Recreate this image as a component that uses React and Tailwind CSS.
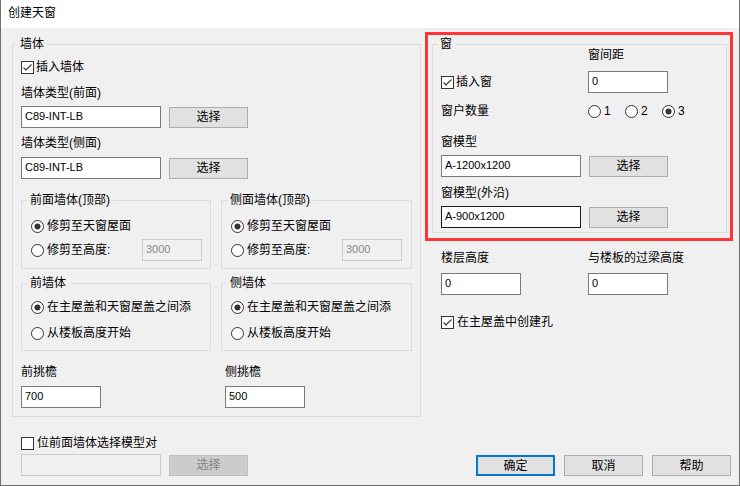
import React from "react";

function Check({ checked }) {
  return (
    <span className="w-[13px] h-[13px] shrink-0 bg-white border border-[#333333] flex items-center justify-center">
      {checked && (
        <svg width="11" height="11" viewBox="0 0 11 11">
          <path d="M1.5 5.5 L4 8 L9.5 2.5" stroke="#333333" strokeWidth="1.1" fill="none" />
        </svg>
      )}
    </span>
  );
}

function Radio({ on }) {
  return (
    <svg width="13" height="13" viewBox="0 0 13 13" className="shrink-0">
      <circle cx="6.5" cy="6.5" r="6" fill="white" stroke="#333333" strokeWidth="1" />
      {on && <circle cx="6.5" cy="6.5" r="3" fill="#333333" />}
    </svg>
  );
}

function Field({ w = "w-[140px]", children, focused, disabled }) {
  const cls = disabled
    ? "bg-[#f0f0f0] border-[#cccccc] text-[#8a8a8a]"
    : focused
    ? "bg-white border-[#1a1a1a] text-black"
    : "bg-white border-[#7a7a7a] text-black";
  return (
    <div className={`${w} h-[22px] shrink-0 border ${cls} flex items-center pl-[3px] pb-[2px] text-[11px] leading-[16px]`}>
      {children}
    </div>
  );
}

function Btn({ children, primary, disabled }) {
  const cls = primary
    ? "border-2 border-[#0078d7] bg-[#e1e1e1] text-black"
    : disabled
    ? "border border-[#bfbfbf] bg-[#cccccc] text-[#838383]"
    : "border border-[#adadad] bg-[#e1e1e1] text-black";
  return (
    <div className={`w-[79px] h-[21px] shrink-0 ${cls} flex items-center justify-center text-[12px] leading-[16px]`}>
      {children}
    </div>
  );
}

function Legend({ children, ml = "ml-[4px]" }) {
  return <legend className={`${ml} px-[3px] text-[12px] leading-[16px]`}>{children}</legend>;
}

export default function App() {
  return (
    <div className="w-[740px] h-[486px] flex flex-col bg-[#f0f0f0] border-x border-b border-[#707070] text-black text-[12px] leading-[16px] font-['Liberation_Sans','Noto_Sans_CJK_SC',sans-serif] overflow-hidden">
      {/* title bar */}
      <div className="h-[28px] shrink-0 bg-white pl-[7px] pt-[5px]">
        <span className="leading-[16px]">创建天窗</span>
      </div>

      {/* top row */}
      <div className="flex items-start">
        {/* left group */}
        <fieldset className="ml-[11px] mt-[8px] w-[409px] border border-[#dcdcdc] p-0">
          <Legend>墙体</Legend>
          <div className="pl-[8px] pb-[8px] flex flex-col">
            <div className="mt-[7px] h-[16px] flex items-center gap-[2px]">
              <Check checked />
              <span>插入墙体</span>
            </div>
            <div className="mt-[10px] h-[16px]">墙体类型(前面)</div>
            <div className="mt-[5px] flex items-center">
              <Field>C89-INT-LB</Field>
              <div className="ml-[8px]"><Btn>选择</Btn></div>
            </div>
            <div className="mt-[7px] h-[16px]">墙体类型(侧面)</div>
            <div className="mt-[6px] flex items-center">
              <Field>C89-INT-LB</Field>
              <div className="ml-[8px]"><Btn>选择</Btn></div>
            </div>

            {/* sub groups row 1 */}
            <div className="mt-[13px] flex items-start">
              <fieldset className="w-[190px] border border-[#dcdcdc] p-0">
                <Legend ml="ml-[5px]">前面墙体(顶部)</Legend>
                <div className="pl-[9px] pr-[8px] pb-[7px] flex flex-col">
                  <div className="mt-[10px] h-[16px] flex items-center gap-[3px]">
                    <Radio on />
                    <span>修剪至天窗屋面</span>
                  </div>
                  <div className="mt-[5px] h-[22px] flex items-center">
                    <Radio />
                    <span className="ml-[3px]">修剪至高度:</span>
                    <div className="ml-auto"><Field w="w-[60px]" disabled>3000</Field></div>
                  </div>
                </div>
              </fieldset>
              <fieldset className="ml-[10px] w-[191px] border border-[#dcdcdc] p-0">
                <Legend ml="ml-[5px]">侧面墙体(顶部)</Legend>
                <div className="pl-[9px] pr-[9px] pb-[7px] flex flex-col">
                  <div className="mt-[10px] h-[16px] flex items-center gap-[3px]">
                    <Radio on />
                    <span>修剪至天窗屋面</span>
                  </div>
                  <div className="mt-[5px] h-[22px] flex items-center">
                    <Radio />
                    <span className="ml-[3px]">修剪至高度:</span>
                    <div className="ml-auto"><Field w="w-[60px]" disabled>3000</Field></div>
                  </div>
                </div>
              </fieldset>
            </div>

            {/* sub groups row 2 */}
            <div className="mt-[6px] flex items-start">
              <fieldset className="w-[190px] border border-[#dcdcdc] p-0">
                <Legend ml="ml-[5px]">前墙体</Legend>
                <div className="pl-[9px] pb-[9px] flex flex-col">
                  <div className="mt-[8px] h-[16px] flex items-center gap-[3px] whitespace-nowrap">
                    <Radio on />
                    <span>在主屋盖和天窗屋盖之间添</span>
                  </div>
                  <div className="mt-[10px] h-[16px] flex items-center gap-[3px]">
                    <Radio />
                    <span>从楼板高度开始</span>
                  </div>
                </div>
              </fieldset>
              <fieldset className="ml-[10px] w-[191px] border border-[#dcdcdc] p-0">
                <Legend ml="ml-[5px]">侧墙体</Legend>
                <div className="pl-[9px] pb-[9px] flex flex-col">
                  <div className="mt-[8px] h-[16px] flex items-center gap-[3px] whitespace-nowrap">
                    <Radio on />
                    <span>在主屋盖和天窗屋盖之间添</span>
                  </div>
                  <div className="mt-[10px] h-[16px] flex items-center gap-[3px]">
                    <Radio />
                    <span>从楼板高度开始</span>
                  </div>
                </div>
              </fieldset>
            </div>

            <div className="mt-[13px] flex h-[16px]">
              <div className="w-[204px]">前挑檐</div>
              <div>侧挑檐</div>
            </div>
            <div className="mt-[6px] flex">
              <div className="w-[204px]"><Field w="w-[80px]">700</Field></div>
              <Field w="w-[80px]">500</Field>
            </div>
          </div>
        </fieldset>

        {/* right column */}
        <div className="ml-[4px] w-[308px] flex flex-col">
          <div className="mt-[4px] border-[3px] border-[#ff3535] pl-[4px] pt-[1px] pb-[5px]">
            <fieldset className="w-[295px] border border-[#dcdcdc] p-0">
              <Legend>窗</Legend>
              <div className="pl-[8px] pb-[4px] flex flex-col">
                <div className="-mt-[5px] h-[16px] flex">
                  <div className="w-[147px]" />
                  <div>窗间距</div>
                </div>
                <div className="mt-[8px] h-[22px] flex items-center">
                  <div className="w-[147px] flex items-center gap-[2px]">
                    <Check checked />
                    <span>插入窗</span>
                  </div>
                  <Field w="w-[80px]">0</Field>
                </div>
                <div className="mt-[10px] h-[16px] flex items-center">
                  <div className="w-[147px]">窗户数量</div>
                  <div className="w-[37px] flex items-center gap-[3px]"><Radio /><span>1</span></div>
                  <div className="w-[37px] flex items-center gap-[3px]"><Radio /><span>2</span></div>
                  <div className="w-[37px] flex items-center gap-[3px]"><Radio on /><span>3</span></div>
                </div>
                <div className="mt-[15px] h-[16px]">窗模型</div>
                <div className="mt-[5px] flex items-center">
                  <Field>A-1200x1200</Field>
                  <div className="ml-[8px]"><Btn>选择</Btn></div>
                </div>
                <div className="mt-[8px] h-[16px]">窗模型(外沿)</div>
                <div className="mt-[5px] flex items-center">
                  <Field focused>A-900x1200</Field>
                  <div className="ml-[8px]"><Btn>选择</Btn></div>
                </div>
              </div>
            </fieldset>
          </div>

          <div className="pl-[16px] flex flex-col">
            <div className="mt-[9px] h-[16px] flex">
              <div className="w-[147px]">楼层高度</div>
              <div>与楼板的过梁高度</div>
            </div>
            <div className="mt-[7px] flex">
              <div className="w-[147px]"><Field w="w-[80px]">0</Field></div>
              <Field w="w-[80px]">0</Field>
            </div>
            <div className="mt-[19px] h-[16px] flex items-center gap-[3px]">
              <Check checked />
              <span>在主屋盖中创建孔</span>
            </div>
          </div>
        </div>
      </div>

      {/* bottom row */}
      <div className="flex items-end">
        <div className="ml-[20px] flex flex-col">
          <div className="mt-[18px] h-[16px] flex items-center gap-[3px]">
            <Check />
            <span>位前面墙体选择模型对</span>
          </div>
          <div className="mt-[3px] flex items-center">
            <Field disabled> </Field>
            <div className="ml-[8px]"><Btn disabled>选择</Btn></div>
          </div>
        </div>
        <div className="ml-auto mr-[8px] flex gap-[9px]">
          <Btn primary>确定</Btn>
          <Btn>取消</Btn>
          <Btn>帮助</Btn>
        </div>
      </div>
    </div>
  );
}
